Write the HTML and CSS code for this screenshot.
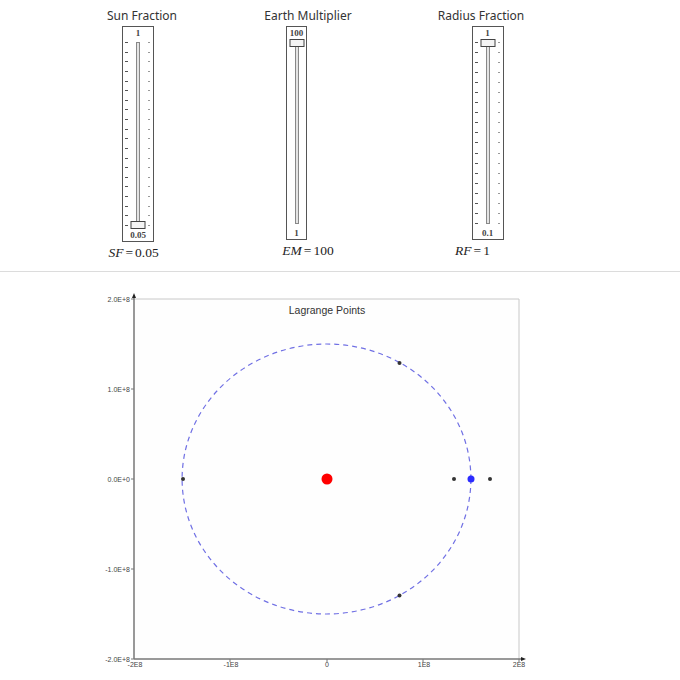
FILE: index.html
```html
<!DOCTYPE html>
<html lang="en">
<head>
    <meta charset="UTF-8">
    <meta name="viewport" content="width=device-width, initial-scale=1.0">
    <title>Lagrange Points</title>
    <link rel="stylesheet" href="styles.css">
</head>
<body>
    <div class="controls">
        <div class="control control-sun">
            <div class="control-title">Sun Fraction</div>
            <div class="slider slider-long">
                <div class="slider-label">1</div>
                <div class="slider-body">
                    <div class="ticks ticks-left" data-count="20"></div>
                    <div class="track"><div class="thumb thumb-bottom"></div></div>
                    <div class="ticks ticks-right" data-count="20"></div>
                </div>
                <div class="slider-label slider-label-bottom">0.05</div>
            </div>
            <div class="readout"><i>SF</i><span class="eq">=</span>0.05</div>
        </div>

        <div class="control control-earth">
            <div class="control-title">Earth Multiplier</div>
            <div class="slider">
                <div class="slider-label">100</div>
                <div class="slider-body">
                    <div class="track"><div class="thumb thumb-top"></div></div>
                </div>
                <div class="slider-label slider-label-bottom">1</div>
            </div>
            <div class="readout"><i>EM</i><span class="eq">=</span>100</div>
        </div>

        <div class="control control-radius">
            <div class="control-title">Radius Fraction</div>
            <div class="slider">
                <div class="slider-label">1</div>
                <div class="slider-body">
                    <div class="ticks ticks-left" data-count="19"></div>
                    <div class="track"><div class="thumb thumb-top"></div></div>
                    <div class="ticks ticks-right" data-count="19"></div>
                </div>
                <div class="slider-label slider-label-bottom">0.1</div>
            </div>
            <div class="readout"><i>RF</i><span class="eq">=</span>1</div>
        </div>
    </div>

    <div class="chart">
        <svg width="680" height="408" viewBox="0 272 680 408">
            <!-- plot frame -->
            <rect class="plot-bg" x="134" y="299" width="385" height="360"></rect>
            <line class="frame" x1="134" y1="299" x2="519" y2="299"></line>
            <line class="frame" x1="519" y1="299" x2="519" y2="659"></line>

            <!-- axes -->
            <line class="axis" x1="134" y1="297" x2="134" y2="659"></line>
            <line class="axis" x1="134" y1="659" x2="522" y2="659"></line>
            <polygon class="arrow" points="134,293 132,298 136,298"></polygon>
            <polygon class="arrow" points="526,659 521,657 521,661"></polygon>

            <!-- y ticks -->
            <g class="tick">
                <line x1="131" y1="299" x2="134" y2="299"></line>
                <line x1="131" y1="389" x2="134" y2="389"></line>
                <line x1="131" y1="479" x2="134" y2="479"></line>
                <line x1="131" y1="569" x2="134" y2="569"></line>
                <line x1="131" y1="659" x2="134" y2="659"></line>
            </g>
            <g class="tick-label" text-anchor="end">
                <text x="130" y="301.5">2.0E+8</text>
                <text x="130" y="391.5">1.0E+8</text>
                <text x="130" y="481.5">0.0E+0</text>
                <text x="130" y="571.5">-1.0E+8</text>
                <text x="130" y="661.5">-2.0E+8</text>
            </g>

            <!-- x ticks -->
            <g class="tick">
                <line x1="230" y1="659" x2="230" y2="662"></line>
                <line x1="327" y1="659" x2="327" y2="662"></line>
                <line x1="423" y1="659" x2="423" y2="662"></line>
                <line x1="519" y1="659" x2="519" y2="662"></line>
            </g>
            <g class="tick-label" text-anchor="middle">
                <text x="135" y="667">-2E8</text>
                <text x="231" y="667">-1E8</text>
                <text x="327" y="667">0</text>
                <text x="424" y="667">1E8</text>
                <text x="519" y="667">2E8</text>
            </g>

            <text class="chart-title" x="327" y="314" text-anchor="middle">Lagrange Points</text>

            <!-- orbit and points -->
            <ellipse class="orbit" cx="326.5" cy="479" rx="144.4" ry="135"></ellipse>
            <circle class="sun" cx="327" cy="479" r="5.5"></circle>
            <circle class="earth" cx="471" cy="479" r="3.5"></circle>
            <circle class="lpoint" cx="454" cy="479" r="2"></circle>
            <circle class="lpoint" cx="490" cy="479" r="2"></circle>
            <circle class="lpoint" cx="183" cy="479" r="2"></circle>
            <circle class="lpoint" cx="399.5" cy="363" r="2"></circle>
            <circle class="lpoint" cx="399.5" cy="595.5" r="2"></circle>
        </svg>
    </div>

    <script>
        // fill tick columns
        document.querySelectorAll('.ticks').forEach(function(col) {
            var n = parseInt(col.dataset.count, 10);
            for (var i = 0; i < n; i++) {
                col.appendChild(document.createElement('span'));
            }
        });
    </script>
</body>
</html>
```

FILE: styles.css
```css
body {
    margin: 0;
    padding: 0;
    background-color: #ffffff;
    font-family: "Noto Sans", Arial, sans-serif;
    color: #333;
}

.controls {
    display: flex;
    height: 271px;
    border-bottom: 1px solid #dcdcdc;
}

.control {
    width: 140px;
    display: flex;
    flex-direction: column;
    align-items: center;
}

.control-sun { margin-left: 72px; }
.control-earth { margin-left: 26px; }
.control-radius { margin-left: 33px; }

.control-title {
    margin-top: 8px;
    margin-bottom: 2px;
    font-size: 12px;
    line-height: 16px;
    white-space: nowrap;
}

/* slider boxes */
.slider {
    border: 1px solid #555;
    display: flex;
    flex-direction: column;
    align-items: center;
    background-color: #fff;
}

.control-sun .slider { margin-right: 8px; }
.control-earth .slider { margin-right: 23px; }
.control-radius .slider { margin-left: 13px; }

.slider-label {
    height: 15px;
    line-height: 13px;
    font-family: "Liberation Serif", "DejaVu Serif", serif;
    font-size: 9px;
    font-weight: bold;
    color: #444;
}

.slider-label-bottom {
    height: 11px;
    padding-top: 4px;
    line-height: 11px;
}

.slider-body {
    display: flex;
    justify-content: center;
    gap: 8px;
    height: 182px;
    min-width: 15px;
    padding: 0 2px;
}

.slider-long .slider-body {
    height: 184px;
}

.ticks {
    width: 3px;
    display: flex;
    flex-direction: column;
    justify-content: space-between;
}

.ticks span {
    display: block;
    height: 1px;
}

.ticks-left span {
    width: 3px;
    background-color: #555;
}

.ticks-right span {
    width: 2px;
    background-color: #999;
}

.track {
    position: relative;
    width: 2px;
    border: 1px solid #888;
    background-color: #e4e4e4;
}

.thumb {
    position: absolute;
    left: 50%;
    transform: translateX(-50%);
    width: 13px;
    height: 6px;
    border: 1px solid #444;
    background-color: #f4f4f4;
}

.thumb-top { top: -4px; }
.thumb-bottom { bottom: -4px; }

.readout {
    margin-top: 3px;
    margin-right: 17px;
    font-family: "Liberation Serif", "DejaVu Serif", serif;
    font-size: 13.5px;
    line-height: 16px;
    color: #222;
    white-space: nowrap;
}

.control-earth .readout { margin-right: 0; }

.readout .eq {
    margin: 0 2px;
}

/* chart */
.chart svg {
    display: block;
}

.plot-bg {
    fill: #fefefe;
}

.frame {
    stroke: #c8c8c8;
    stroke-width: 1;
}

.axis {
    stroke: #777;
    stroke-width: 1.5;
}

.arrow {
    fill: #222;
}

.tick line {
    stroke: #777;
    stroke-width: 1;
}

.tick-label {
    font-family: "Liberation Sans", Arial, sans-serif;
    font-size: 7px;
    fill: #444;
}

.chart-title {
    font-family: "Liberation Sans", Arial, sans-serif;
    font-size: 10.5px;
    fill: #333;
}

.orbit {
    fill: none;
    stroke: #7070e4;
    stroke-width: 1.2;
    stroke-dasharray: 5 4;
}

.sun { fill: #ff0000; }
.earth { fill: #2b2bff; }
.lpoint { fill: #333; }
```
